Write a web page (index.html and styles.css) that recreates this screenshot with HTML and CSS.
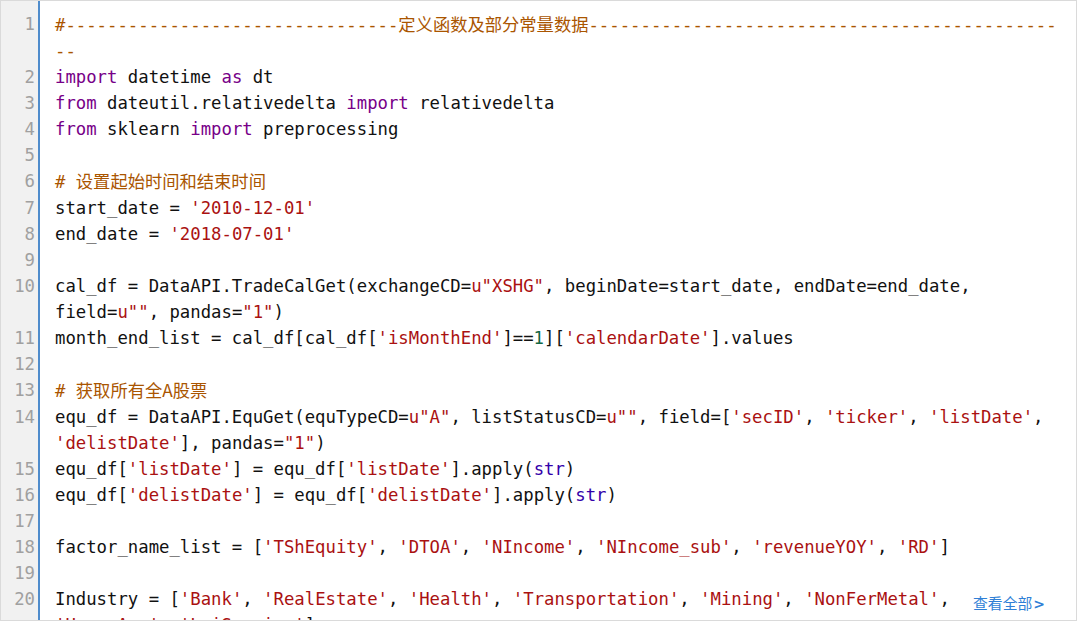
FILE: index.html
```html
<!DOCTYPE html>
<html lang="zh-CN">
<head>
<meta charset="utf-8">
<title>code</title>
<link rel="stylesheet" href="styles.css">
</head>
<body>
<div class="box">
  <div class="row"><span class="ln">1</span><span class="code brk"><span class="c">#--------------------------------<span class="cjk">定义函数及部分常量数据</span>-----------------------------------------------</span></span></div>
  <div class="row"><span class="ln">2</span><span class="code"><span class="k">import</span> datetime <span class="k">as</span> dt</span></div>
  <div class="row"><span class="ln">3</span><span class="code"><span class="k">from</span> dateutil.relativedelta <span class="k">import</span> relativedelta</span></div>
  <div class="row"><span class="ln">4</span><span class="code"><span class="k">from</span> sklearn <span class="k">import</span> preprocessing</span></div>
  <div class="row"><span class="ln">5</span><span class="code"></span></div>
  <div class="row"><span class="ln">6</span><span class="code"><span class="c"># <span class="cjk">设置起始时间和结束时间</span></span></span></div>
  <div class="row"><span class="ln">7</span><span class="code">start_date = <span class="s">'2010-12-01'</span></span></div>
  <div class="row"><span class="ln">8</span><span class="code">end_date = <span class="s">'2018-07-01'</span></span></div>
  <div class="row"><span class="ln">9</span><span class="code"></span></div>
  <div class="row"><span class="ln">10</span><span class="code">cal_df = DataAPI.TradeCalGet(exchangeCD=<span class="s">u"XSHG"</span>, beginDate=start_date, endDate=end_date, field=<span class="s">u""</span>, pandas=<span class="s">"1"</span>)</span></div>
  <div class="row"><span class="ln">11</span><span class="code">month_end_list = cal_df[cal_df[<span class="s">'isMonthEnd'</span>]==<span class="n">1</span>][<span class="s">'calendarDate'</span>].values</span></div>
  <div class="row"><span class="ln">12</span><span class="code"></span></div>
  <div class="row"><span class="ln">13</span><span class="code"><span class="c"># <span class="cjk">获取所有全A股票</span></span></span></div>
  <div class="row"><span class="ln">14</span><span class="code">equ_df = DataAPI.EquGet(equTypeCD=<span class="s">u"A"</span>, listStatusCD=<span class="s">u""</span>, field=[<span class="s">'secID'</span>, <span class="s">'ticker'</span>, <span class="s">'listDate'</span>, <span class="s">'delistDate'</span>], pandas=<span class="s">"1"</span>)</span></div>
  <div class="row"><span class="ln">15</span><span class="code">equ_df[<span class="s">'listDate'</span>] = equ_df[<span class="s">'listDate'</span>].apply(<span class="b">str</span>)</span></div>
  <div class="row"><span class="ln">16</span><span class="code">equ_df[<span class="s">'delistDate'</span>] = equ_df[<span class="s">'delistDate'</span>].apply(<span class="b">str</span>)</span></div>
  <div class="row"><span class="ln">17</span><span class="code"></span></div>
  <div class="row"><span class="ln">18</span><span class="code">factor_name_list = [<span class="s">'TShEquity'</span>, <span class="s">'DTOA'</span>, <span class="s">'NIncome'</span>, <span class="s">'NIncome_sub'</span>, <span class="s">'revenueYOY'</span>, <span class="s">'RD'</span>]</span></div>
  <div class="row"><span class="ln">19</span><span class="code"></span></div>
  <div class="row"><span class="ln">20</span><span class="code">Industry = [<span class="s">'Bank'</span>, <span class="s">'RealEstate'</span>, <span class="s">'Health'</span>, <span class="s">'Transportation'</span>, <span class="s">'Mining'</span>, <span class="s">'NonFerMetal'</span>, <span class="s">'HouseApp'</span>, <span class="s">'LeiService'</span>]</span></div>
  <a class="more" href="#">查看全部<span class="chev">&gt;</span></a>
</div>
</body>
</html>
```

FILE: styles.css
```css
html, body {
  margin: 0;
  padding: 0;
  background: #ffffff;
}

.box {
  position: relative;
  box-sizing: border-box;
  width: 1077px;
  height: 621px;
  overflow: hidden;
  border: 1px solid #dadada;
  padding-top: 10px;
  background: linear-gradient(to right, #f1f1f1 0, #f1f1f1 37px, #4f8ccc 37px, #4f8ccc 39px, #ffffff 39px);
  font-family: "DejaVu Sans Mono", "Noto Sans CJK SC", monospace;
  font-size: 17.3px;
  line-height: 26px;
  color: #111;
}

.row {
  display: flex;
  align-items: flex-start;
}

.ln {
  flex: 0 0 auto;
  box-sizing: border-box;
  width: 37px;
  padding-right: 3px;
  text-align: right;
  color: #a0a0a0;
}

.code {
  flex: 1 1 auto;
  min-width: 0;
  min-height: 26px;
  margin-left: 2px;
  padding-left: 15px;
  padding-right: 13px;
  white-space: pre-wrap;
  overflow-wrap: break-word;
}

.brk {
  word-break: break-all;
}

.cjk {
  font-family: "Noto Sans CJK SC", sans-serif;
}

.k { color: #770088; }
.s { color: #aa1111; }
.n { color: #116644; }
.c { color: #aa5500; }
.b { color: #3300aa; }

.more {
  position: absolute;
  right: 31px;
  bottom: 6px;
  padding-left: 6px;
  background: #ffffff;
  font-family: "Noto Sans CJK SC", sans-serif;
  font-size: 14.8px;
  line-height: 20px;
  color: #2f7fd6;
  text-decoration: none;
}

.chev {
  margin-left: 1px;
  font-family: "DejaVu Sans", sans-serif;
  font-weight: bold;
  font-size: 14px;
}
```
